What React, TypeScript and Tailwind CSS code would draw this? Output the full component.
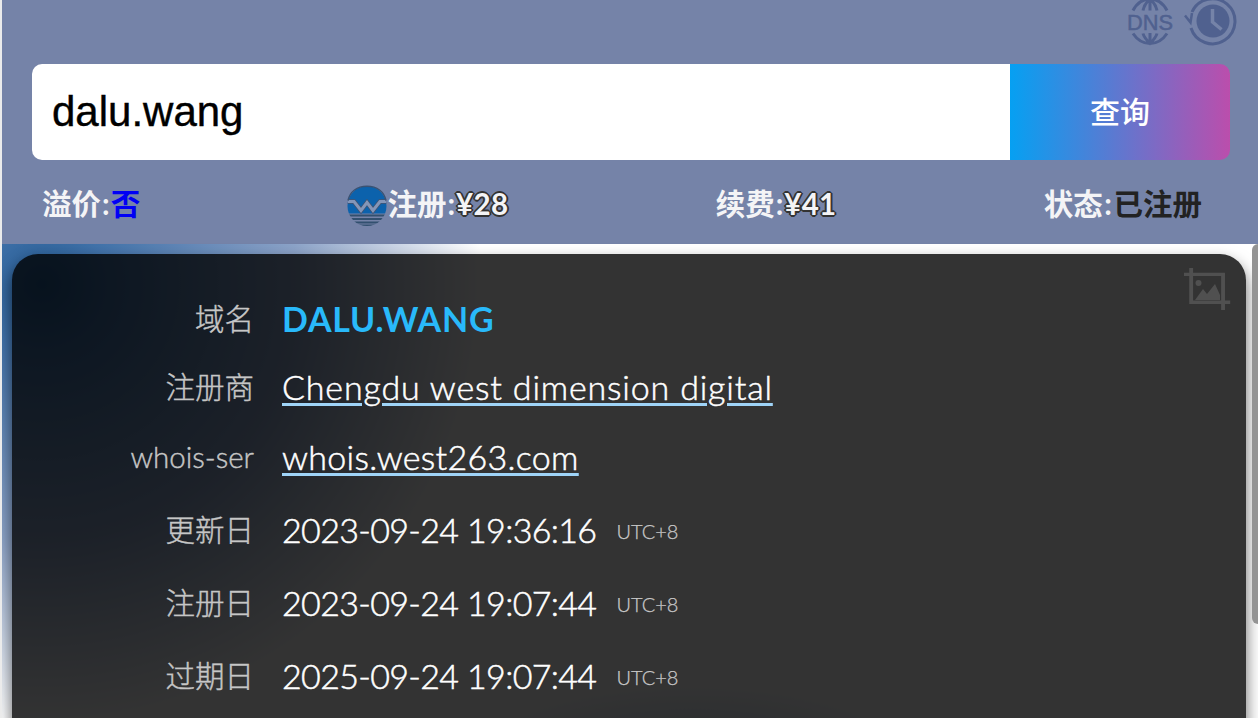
import { useState } from 'react';

const records = [
  { label: '更新日', value: '2023-09-24 19:36:16' },
  { label: '注册日', value: '2023-09-24 19:07:44' },
  { label: '过期日', value: '2025-09-24 19:07:44' },
];

const outline =
  'tracking-[0.3px] [text-shadow:1px_1px_0_#333,-1px_1px_0_#333,1px_-1px_0_#333,-1px_-1px_0_#333,2px_0_0_#333,-2px_0_0_#333,0_2px_0_#333,0_-2px_0_#333]';

const DnsIcon = () => (
  <svg
    width="48"
    height="48"
    viewBox="0 0 48 48"
    className="overflow-visible text-[#50618f]"
  >
    <g fill="none" stroke="currentColor" strokeWidth="3">
      <path d="M7 12.500C11 5 17 1 24 1s13 4 17 11.500M24 0v12.500M17 12.500c1-5 4-9 7-11.500 3 2.500 6 6.500 7 11.500" />
      <path d="M7 35.500c4 6 10 10 17 10S37 41.500 41 35.500M24 35v11M17 35.500c1 4 4 7 7 10 3-3 6-6 7-10" />
    </g>
    <text
      x="24"
      y="31.500"
      textAnchor="middle"
      textLength="46"
      lengthAdjust="spacingAndGlyphs"
      fill="currentColor"
      stroke="currentColor"
      strokeWidth="0.5"
      className="font-['Liberation_Sans',sans-serif] text-[22px] font-normal"
    >
      DNS
    </text>
  </svg>
);

const HistoryIcon = () => (
  <svg width="54" height="48" viewBox="0 0 54 48" className="text-[#50618f]">
    <path
      d="M8 12A22.500 22.500 0 1 1 7 28"
      fill="none"
      stroke="currentColor"
      strokeWidth="3"
    />
    <path
      d="M1 15.500l5.500 7L8 13"
      fill="none"
      stroke="currentColor"
      strokeWidth="2.500"
    />
    <circle cx="29" cy="21" r="16.500" fill="currentColor" />
    <path d="M28.500 9v13l9 7.500" fill="none" stroke="#7583a8" strokeWidth="3.500" />
  </svg>
);

const WestLogo = () => (
  <svg width="40" height="42" viewBox="0 0 40 42">
    <defs>
      <clipPath id="disc">
        <ellipse cx="20" cy="21" rx="19.500" ry="20" />
      </clipPath>
    </defs>
    <g clipPath="url(#disc)">
      <path d="M0 0h40v28.500H0z" fill="#0c62ac" />
      <path
        d="M-1 16.500h8l7 9 6-8 6 8 7-9h8"
        fill="none"
        stroke="#45536f"
        strokeWidth="4.500"
      />
      <path
        d="M-1 16.500h8l7 9 6-8 6 8 7-9h8"
        fill="none"
        stroke="#8496b8"
        strokeWidth="3"
      />
      <path
        d="M0 30.500h40M0 34h40M0 37.500h40M0 40.500h40"
        stroke="#32506f"
        strokeWidth="2.200"
      />
    </g>
    <path
      d="M1 15.500C3 6.500 10 1.300 20 1.300S37 6.500 39 15.500"
      fill="none"
      stroke="#3a5273"
      strokeWidth="1.500"
    />
  </svg>
);

const CropImageIcon = () => (
  <svg width="48" height="46" viewBox="0 0 48 46" className="text-[#505050]">
    <path
      d="M0 7.500h35.500V44M6.500 1v35H42"
      fill="none"
      stroke="currentColor"
      strokeWidth="3.500"
      transform="scale(1.100 .98)"
    />
    <circle cx="14.500" cy="16" r="3" fill="currentColor" />
    <path d="M11 33l8-11 4 5 8-10 5 11v5z" fill="currentColor" />
  </svg>
);

const Row = ({ label, children, className = '' }: any) => (
  <div className={'flex items-center ' + className}>
    <div className="w-[242px] shrink-0 text-right text-[29.500px] leading-none text-[#c6c6c6] [-webkit-text-stroke:0.4px]">
      {label}
    </div>
    <div className="ml-7 flex items-center text-[34px] leading-none whitespace-nowrap text-white">
      {children}
    </div>
  </div>
);

const App = () => {
  const [domain, setDomain] = useState('dalu.wang');

  return (
    <div className="flex h-[718px] w-[1258px] flex-col overflow-hidden border-l-2 border-[#ebebeb] bg-white font-[Lato,'Noto_Sans_CJK_SC',sans-serif]">
      <header className="h-[244px] shrink-0 bg-[#7583a8]">
        <div className="flex h-16 justify-end gap-2.5 pr-[20px]">
          <div className="-mt-0.5">
            <DnsIcon />
          </div>
          <HistoryIcon />
        </div>
        <div className="ml-[30px] flex h-24 w-[1198px] overflow-hidden rounded-[10px]">
          <input
            value={domain}
            onChange={(e) => setDomain(e.target.value)}
            className="w-[978px] bg-white px-5 pb-px font-['Liberation_Sans',sans-serif] text-[42px] text-black outline-none [-webkit-text-stroke:0.4px]"
          />
          <button className="w-[220px] bg-linear-to-r/srgb from-[#06a0f2] to-[#bb4eac] pb-0.5 text-[30px] font-medium text-white">
            查询
          </button>
        </div>
        <div className="flex h-[84px] items-center justify-between pt-1 pr-[56px] pl-10 text-[29.500px] font-bold text-[#f4f4f6]">
          <div>
            溢价<span className="mx-px">:</span>
            <span className="text-[#0000f5]">否</span>
          </div>
          <div className="flex items-center">
            <div className="pt-1">
              <WestLogo />
            </div>
            注册<span className="mx-px">:</span>
            <span className={outline}>¥28</span>
          </div>
          <div>
            续费<span className="mx-px">:</span>
            <span className={outline}>¥41</span>
          </div>
          <div>
            状态<span className="mx-[1.5px]">:</span>
            <span className="text-[#222]">已注册</span>
          </div>
        </div>
      </header>

      <main className="relative flex grow bg-[radial-gradient(ellipse_230px_80px_at_690px_520px,#c4d4e8_0%,transparent_100%),radial-gradient(circle_440px_at_40px_40px,#255c94_0%,#4172aa_15%,#8ca3c8_58%,#ffffff_100%)] pt-2.5 pl-2.5">
        <section className="relative h-[500px] w-[1234px] rounded-t-[26px] bg-black/80 shadow-[0_8px_16px_rgba(0,0,0,0.6)]">
          <div className="absolute top-[13px] right-3.5">
            <CropImageIcon />
          </div>
          <Row label="域名" className="mt-[33px] h-16 font-light">
            <span className="font-bold tracking-[0.8px] text-[#29b9fa]">
              DALU.WANG
            </span>
          </Row>
          <Row label="注册商" className="h-[71px] font-light">
            <a className="tracking-[0.83px] underline decoration-[#9fd4f8] decoration-3 underline-offset-3 [-webkit-text-stroke:0.5px]">
              Chengdu west dimension digital
            </a>
          </Row>
          <Row label="whois-ser" className="mb-0.5 h-[70px] font-light">
            <a className="tracking-[0.3px] underline decoration-[#9fd4f8] decoration-3 underline-offset-3 [-webkit-text-stroke:0.5px]">
              whois.west263.com
            </a>
          </Row>
          {records.map((item) => (
            <Row
              key={item.label}
              label={item.label}
              className="-mt-px mb-px h-[73px] font-light"
            >
              <span className="tracking-[-0.65px] [-webkit-text-stroke:0.5px]">
                {item.value}
              </span>
              <span className="mt-0.5 ml-5 text-xl leading-none text-[#c8c8c8] [-webkit-text-stroke:0.25px]">
                UTC+8
              </span>
            </Row>
          ))}
        </section>
        <div className="absolute top-0 right-0 h-[380px] w-1.5 rounded-l-md bg-[#949494]" />
      </main>
    </div>
  );
};

export default App;
